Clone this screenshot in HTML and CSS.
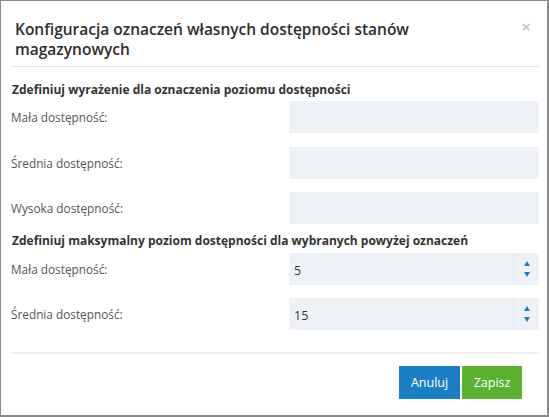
FILE: index.html
```html
<!DOCTYPE html>
<html lang="pl">
<head>
<meta charset="utf-8">
<link rel="stylesheet" href="styles.css">
</head>
<body>
<div class="modal">
  <div class="header">
    <h1 class="title">Konfiguracja oznaczeń własnych dostępności stanów magazynowych</h1>
    <span class="close">×</span>
  </div>
  <div class="body">
    <h2 class="section">Zdefiniuj wyrażenie dla oznaczenia poziomu dostępności</h2>
    <div class="grid">
      <label class="label">Mała dostępność:</label>
      <div class="field"></div>
      <label class="label">Średnia dostępność:</label>
      <div class="field"></div>
      <label class="label">Wysoka dostępność:</label>
      <div class="field"></div>
    </div>
    <h2 class="section section2">Zdefiniuj maksymalny poziom dostępności dla wybranych powyżej oznaczeń</h2>
    <div class="grid grid2">
      <label class="label">Mała dostępność:</label>
      <div class="field number"><span class="value">5</span><span class="spin"><span class="up"></span><span class="down"></span></span></div>
      <label class="label">Średnia dostępność:</label>
      <div class="field number"><span class="value">15</span><span class="spin"><span class="up"></span><span class="down"></span></span></div>
    </div>
  </div>
  <div class="footer">
    <button class="btn btn-cancel">Anuluj</button>
    <button class="btn btn-save">Zapisz</button>
  </div>
</div>
</body>
</html>
```
FILE: styles.css
```css
html, body {
  margin: 0;
  padding: 0;
  background: #fff;
}
body {
  font-family: "Open Sans", "Noto Sans", sans-serif;
  color: #333;
}
.modal {
  width: 549px;
  height: 417px;
  box-sizing: border-box;
  border-left: 1px solid #8a8a8a;
  border-top: 1px solid #8a8a8a;
  border-right: 2px solid #8a8a8a;
  border-bottom: 2px solid #8a8a8a;
  background: #fff;
  display: flex;
  flex-direction: column;
}
.header {
  margin: 0 8px 0 10px;
  padding: 18px 4px 7px 4px;
  border-bottom: 1px solid #e5e5e5;
  display: flex;
  align-items: flex-start;
}
.title {
  margin: 0;
  flex: 1;
  max-width: 420px;
  font-size: 15.5px;
  font-weight: 600;
  line-height: 20px;
  color: #2e2e2e;
}
.close {
  margin-left: auto;
  color: #c4c4c4;
  font-size: 17px;
  line-height: 20px;
  margin-top: -2px;
  margin-right: 4px;
  font-weight: 600;
}
.body {
  padding: 14px 9px 0 10px;
  margin-right: -1px;
}
.section {
  margin: 0 0 2px 1px;
  font-size: 12px;
  font-weight: 700;
  line-height: 18px;
  color: #333;
}
.section2 {
  margin-top: 8px;
  margin-bottom: 3px;
}
.grid {
  display: grid;
  grid-template-columns: 1fr 250px;
  grid-auto-rows: 32px;
  row-gap: 13.5px;
  align-items: center;
}
.grid2 {
  row-gap: 13px;
}
.label {
  font-size: 11.8px;
  color: #555;
  padding-left: 0;
}
.field {
  height: 32px;
  background: #eef2f6;
}
.number {
  display: flex;
  align-items: center;
}
.value {
  flex: 1;
  padding-left: 5px;
  font-size: 12.5px;
  color: #333;
  padding-top: 3px;
}
.spin {
  width: 25px;
  height: 100%;
  border-left: 1px solid #e6eaee;
  display: flex;
  flex-direction: column;
  align-items: center;
  justify-content: center;
  gap: 6px;
}
.up, .down {
  width: 0;
  height: 0;
  border-left: 3px solid transparent;
  border-right: 3px solid transparent;
}
.up {
  border-bottom: 5px solid #1a7dc4;
}
.down {
  border-top: 5px solid #1a7dc4;
}
.footer {
  margin: 22px 8px 0 10px;
  padding-top: 12px;
  border-top: 2px solid #eeeeee;
  display: flex;
  justify-content: flex-end;
  gap: 2px;
  padding-right: 17px;
}
.btn {
  height: 33px;
  border: none;
  color: #fff;
  font-family: "Open Sans", "Noto Sans", sans-serif;
  font-size: 12.5px;
  padding: 0;
  cursor: pointer;
}
.btn-cancel {
  width: 61px;
  background: #1b7fc5;
}
.btn-save {
  width: 60px;
  background: #5cb131;
}
```
